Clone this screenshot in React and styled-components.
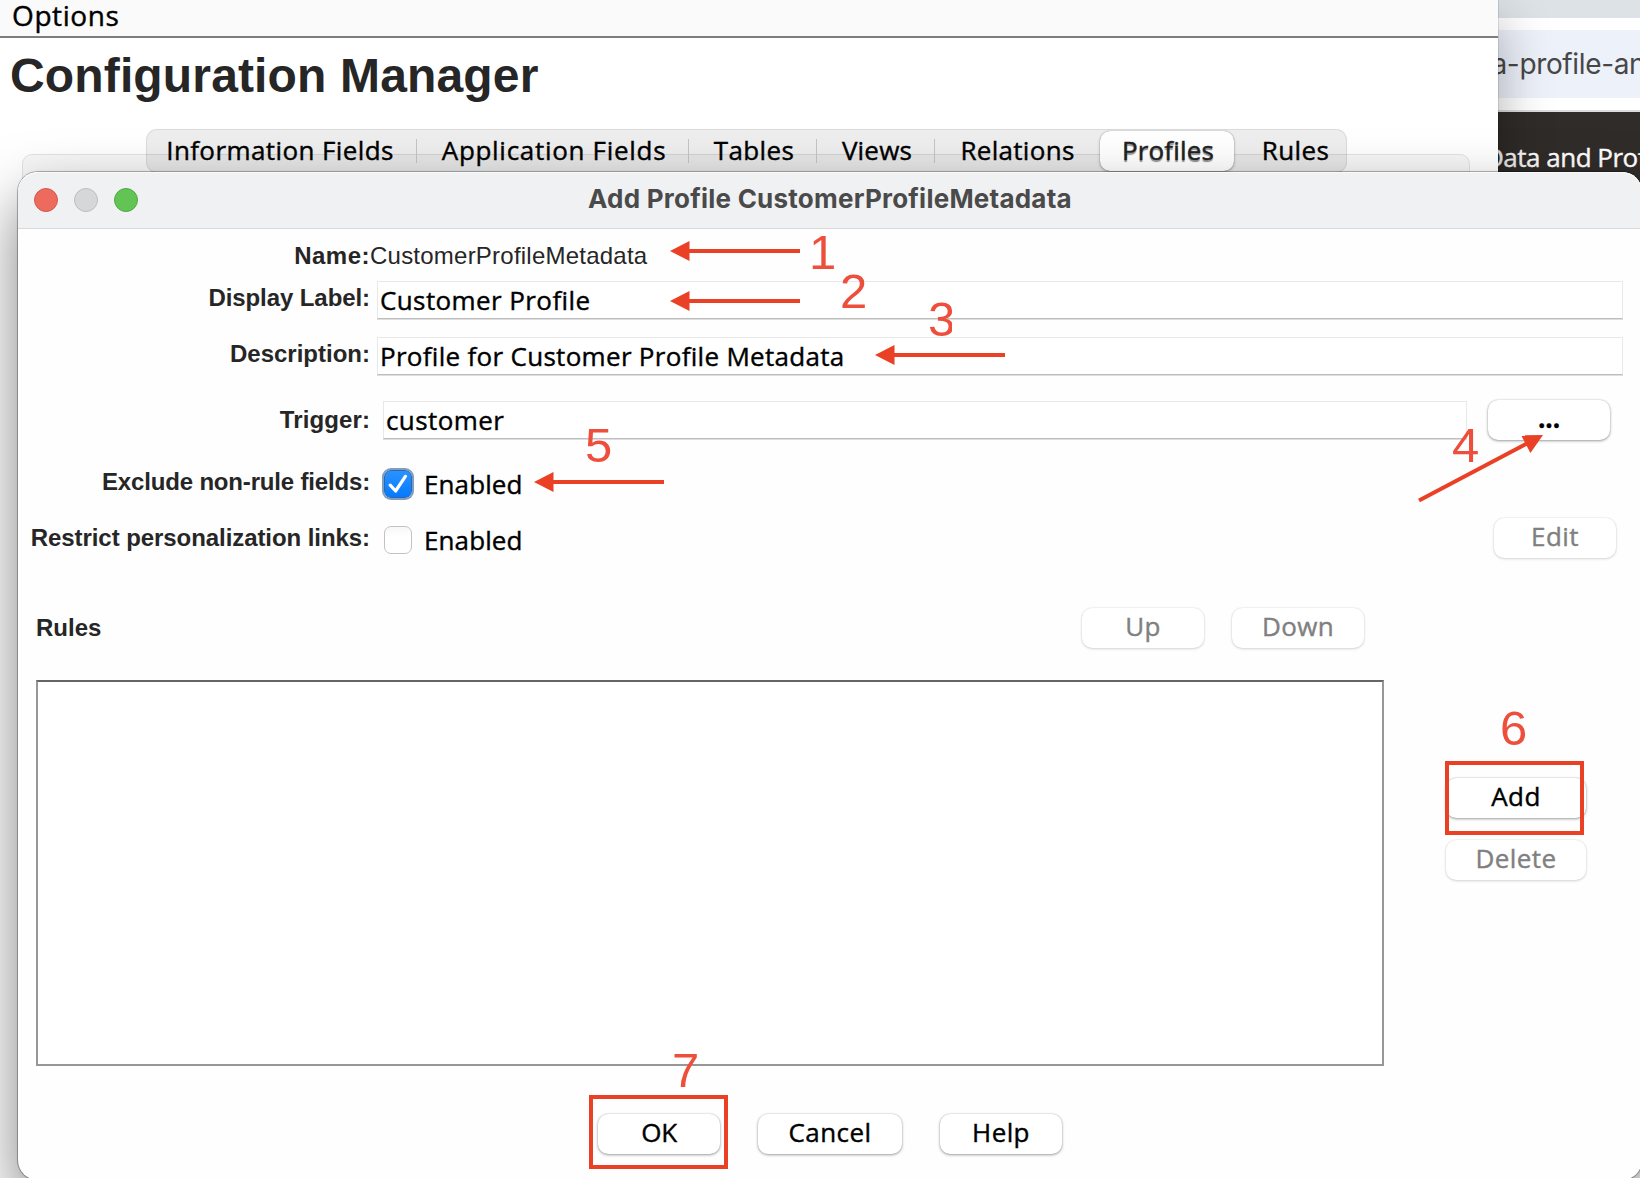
import React from "react";
import styled, { createGlobalStyle, css } from "styled-components";

const Global = createGlobalStyle`
  *, *::before, *::after { box-sizing: border-box; }
  body { margin: 0; background: #fff; overflow: hidden; }
`;

const ui = css`
  font-family: "Open Sans", "Noto Sans", sans-serif;
  font-size: 26px;
  line-height: 36px;
  letter-spacing: ${(p) => (p.$track === undefined ? 0.4 : p.$track)}px;
  -webkit-text-stroke: 0.4px currentColor;
  white-space: pre;
`;
const helvetica = css`
  font-family: "Liberation Sans", Arial, sans-serif;
  letter-spacing: ${(p) => p.$track || 0}px;
  white-space: pre;
`;

const Desktop = styled.div`
  position: relative;
  width: 1640px;
  height: 1178px;
  overflow: hidden;
  display: flex;
  background: #fff;
`;

/* browser window showing at the right */
const Browser = styled.div`
  flex: 1;
  min-width: 0;
  display: flex;
  flex-direction: column;
`;
const TabStrip = styled.div`
  height: 18px;
  background: #dde2e6;
`;
const AddressRow = styled.div`
  height: 92px;
  padding: 12px 0;
  background: #fff;
`;
const Address = styled.div`
  height: 68px;
  overflow: hidden;
  background: #edf1fa;
  color: #474747;
  font: 400 28px/68px Inter, sans-serif;
  letter-spacing: -0.35px;
  white-space: pre;
  text-indent: -6.5px;
`;
const Page = styled.div`
  ${ui}
  height: 220px;
  overflow: hidden;
  border-top: 2px solid #dcdcdc;
  background: #302c29;
  color: #fff;
  padding-top: 27px;
  text-indent: -13px;
`;

/* configuration window */
const Manager = styled.div`
  position: relative;
  z-index: 1;
  width: 1498px;
  height: 1178px;
  background: #fff;
  box-shadow: 0 0 1px rgba(0, 0, 0, 0.6), 0 20px 50px rgba(0, 0, 0, 0.32);
`;
const MenuBar = styled.div`
  ${ui}
  height: 38px;
  padding-left: 12px;
  border-bottom: 2px solid #7d7d7d;
  background: #fafafa;
  color: #000;
  font-size: 28px;
  line-height: 30px;
`;
const Heading = styled.h1`
  ${helvetica}
  margin: 0;
  padding-left: 10px;
  height: 91px;
  color: #262626;
  font-size: 48px;
  line-height: 75px;
`;
const TabArea = styled.div`
  display: grid;
  grid-template-columns: 22px 1448px;
  grid-template-rows: 25px 1fr;
  height: 1048px;
`;
const TabPane = styled.div`
  grid-column: 2;
  grid-row: 2;
  border: 1px solid #e2e2e2;
  border-radius: 10px;
  background: #f7f7f7;
`;
const TabBar = styled.div`
  grid-column: 2;
  grid-row: 1 / 3;
  z-index: 1;
  display: flex;
  width: 1201px;
  height: 44px;
  margin-left: 124px;
  border: 1px solid rgba(0, 0, 0, 0.08);
  border-radius: 11px;
  background: rgba(0, 0, 0, 0.065);
`;
const Tab = styled.div`
  ${ui}
  position: relative;
  flex: none;
  width: ${(p) => p.$w}px;
  height: 40px;
  margin-top: 1px;
  padding: ${(p) => p.$pad || "0"};
  line-height: 39px;
  text-align: center;
  color: #000;
  ${(p) =>
    p.$divider &&
    css`
      &::after {
        content: "";
        position: absolute;
        right: 1px;
        top: 8px;
        width: 1px;
        height: 24px;
        background: #c4c4c4;
      }
    `}
  ${(p) =>
    p.$selected &&
    css`
      border-radius: 10px;
      background: #fff;
      color: #222;
      box-shadow: 0 0 1px rgba(0, 0, 0, 0.4), 0 1px 3px rgba(0, 0, 0, 0.3);
      text-shadow: 0 2px 1px rgba(0, 0, 0, 0.45);
    `}
`;

/* dialog */
const Dialog = styled.div`
  position: absolute;
  z-index: 2;
  left: 18px;
  top: 172px;
  width: 1624px;
  height: 1008px;
  border-radius: 20px;
  background: #fefefe;
  box-shadow: 0 0 0 1px rgba(0, 0, 0, 0.22), 0 0 2px rgba(0, 0, 0, 0.3),
    0 28px 60px rgba(0, 0, 0, 0.5);
`;
const TitleBar = styled.div`
  display: flex;
  align-items: center;
  height: 57px;
  padding: 0 16px;
  border-bottom: 1px solid #d8d9da;
  border-radius: 20px 20px 0 0;
  background: #f0f1f3;
  box-shadow: inset 0 1px #fafafa;
`;
const Lights = styled.div`
  display: flex;
  gap: 16px;
  width: 200px;
`;
const Light = styled.span`
  width: 24px;
  height: 24px;
  border-radius: 50%;
  border: 1px solid ${(p) => p.$edge};
  background: ${(p) => p.$color};
`;
const Title = styled.div`
  flex: 1;
  margin-right: 200px;
  padding-bottom: 3px;
  text-align: center;
  color: #4a4a4a;
  font: 700 26px/34px Inter, sans-serif;
  letter-spacing: 0.23px;
`;

const Row = styled.div`
  display: flex;
  align-items: center;
  height: ${(p) => p.$h}px;
  margin-top: ${(p) => p.$top || 0}px;
`;
const Label = styled.div`
  ${helvetica}
  width: 352px;
  padding-bottom: ${(p) => p.$lift || 0}px;
  text-align: right;
  color: #262626;
  font-size: 24px;
  font-weight: 700;
  line-height: 30px;
`;
const NameRow = styled(Row)`
  padding-top: 2px;
`;
const NameValue = styled.div`
  ${helvetica}
  color: #262626;
  font-size: 24px;
  line-height: 30px;
`;
const Field = styled.div`
  ${ui}
  width: ${(p) => p.$w}px;
  height: 38px;
  margin: 0 0 1px ${(p) => p.$left}px;
  padding-left: 2px;
  border: 1px solid #e8e8e8;
  border-bottom: 1px solid #bdbdbd;
  box-shadow: 0 1px #dedede;
  background: #fff;
  color: #000;
  line-height: 37px;
`;
const Toggle = styled.div`
  display: flex;
  align-items: center;
  padding-top: ${(p) => p.$drop || 0}px;
`;
const Box = styled.span`
  display: flex;
  align-items: center;
  justify-content: center;
  width: 28px;
  height: 28px;
  margin-left: 14px;
  border-radius: 7px;
  border: 1px solid #c2c2c2;
  background: linear-gradient(#f7f7f7, #fff 35%);
  ${(p) =>
    p.$checked &&
    css`
      border: 1px solid #2f66ad;
      background: linear-gradient(#2a93ff, #047aff);
      box-shadow: 0 0 0 2px #7e9dbf;
    `}
`;
const BoxLabel = styled.span`
  ${ui}
  margin-left: 12px;
  color: #000;
`;
const Button = styled.div`
  ${ui}
  width: ${(p) => p.$w}px;
  height: 40px;
  margin-right: ${(p) => p.$end || 0}px;
  padding-bottom: 4px;
  border-radius: 10px;
  background: #fff;
  color: ${(p) => (p.$disabled ? "#808080" : "#000")};
  font-weight: ${(p) => (p.$strong ? 700 : 400)};
  text-align: center;
  box-shadow: ${(p) =>
    p.$disabled
      ? "0 0 1.5px rgba(0,0,0,.16), 0 1px 3px rgba(0,0,0,.14)"
      : "0 0 1.5px rgba(0,0,0,.22), 0 1px 3px rgba(0,0,0,.36)"};
`;
const Spring = styled.div`
  flex: 1;
`;
const RulesTitle = styled(Label)`
  width: auto;
  padding-left: 18px;
`;
const MoveButtons = styled.div`
  display: flex;
  gap: 28px;
  margin-right: 278px;
`;
const RulesArea = styled.div`
  display: flex;
  height: 386px;
  margin-top: 32px;
  padding-left: 18px;
`;
const RulesList = styled.div`
  width: 1348px;
  border: 2px solid #979797;
  border-top-color: #656565;
  background: #fff;
`;
const SideButtons = styled.div`
  display: flex;
  flex-direction: column;
  gap: 22px;
  padding: 98px 0 0 62px;
`;
const Footer = styled.div`
  display: flex;
  gap: 38px;
  margin-top: 48px;
  padding-left: 580px;
`;

/* callouts drawn over the windows */
const Digit = styled.span`
  ${helvetica}
  position: absolute;
  z-index: 4;
  left: ${(p) => p.$x}px;
  top: ${(p) => p.$y - 42}px;
  width: ${(p) => p.$clip || 30}px;
  height: 50px;
  overflow: hidden;
  color: #ee4f3d;
  font-size: 49px;
  line-height: 50px;
`;
const Frame = styled.div`
  position: absolute;
  z-index: 4;
  left: ${(p) => p.$x}px;
  top: ${(p) => p.$y}px;
  width: 139px;
  height: 74px;
  border: 4px solid #ea4025;
`;
const Arrows = styled.svg`
  position: absolute;
  z-index: 4;
  left: 0;
  top: 0;
  pointer-events: none;
`;

const Arrow = ({ from, to }) => {
  const length = Math.hypot(to[0] - from[0], to[1] - from[1]);
  const angle = (Math.atan2(to[1] - from[1], to[0] - from[0]) * 180) / Math.PI;
  return (
    <g transform={`translate(${from[0]} ${from[1]}) rotate(${angle})`} fill="#ea4025">
      <rect x="0" y="-2" width={length - 18} height="4" />
      <path d={`M${length} 0 L${length - 19.5} -10 V10 Z`} />
    </g>
  );
};

const tabs = [
  { name: "Information Fields", w: 271, divider: true, pad: "0 5px 0 0" },
  { name: "Application Fields", w: 272, divider: true, track: 0.7 },
  { name: "Tables", w: 128, divider: true },
  { name: "Views", w: 118, divider: true, track: 0.2 },
  { name: "Relations", w: 164, track: 0.3, pad: "0 1px 0 0" },
  { name: "Profiles", w: 134, selected: true, track: 0.15, pad: "0 0 0 2px" },
  { name: "Rules", w: 113, pad: "0 0 0 10px" },
];

const arrows = [
  { from: [800, 251], to: [670, 251] },
  { from: [800, 301], to: [670, 301] },
  { from: [1005, 355], to: [875, 355] },
  { from: [664, 482], to: [534, 482] },
  { from: [1419, 500.5], to: [1543, 435] },
];

const digits = [
  { n: "1", x: 809, y: 269 },
  { n: "2", x: 840, y: 308 },
  { n: "3", x: 928, y: 336, clip: 24 },
  { n: "4", x: 1452, y: 462 },
  { n: "5", x: 585, y: 462 },
  { n: "6", x: 1500, y: 745 },
  { n: "7", x: 672, y: 1087 },
];

export default function App() {
  return (
    <Desktop>
      <Global />
      <Manager>
        <MenuBar $track={0.6}>Options</MenuBar>
        <Heading $track={0.15}>Configuration Manager</Heading>
        <TabArea>
          <TabPane />
          <TabBar>
            {tabs.map((t) => (
              <Tab
                key={t.name}
                $w={t.w}
                $pad={t.pad}
                $track={t.track}
                $divider={t.divider}
                $selected={t.selected}
              >
                {t.name}
              </Tab>
            ))}
          </TabBar>
        </TabArea>
      </Manager>
      <Browser>
        <TabStrip />
        <AddressRow>
          <Address>a-profile-an</Address>
        </AddressRow>
        <Page $track={-0.5}>Data and Prof</Page>
      </Browser>

      <Dialog>
        <TitleBar>
          <Lights>
            <Light $color="#ed6a5e" $edge="#d6584c" />
            <Light $color="#d6d7d8" $edge="#bdbebf" />
            <Light $color="#61c454" $edge="#51a945" />
          </Lights>
          <Title>Add Profile CustomerProfileMetadata</Title>
        </TitleBar>
        <NameRow $h={52}>
          <Label $track={0.5}>Name:</Label>
          <NameValue $track={0.23}>CustomerProfileMetadata</NameValue>
        </NameRow>
        <Row $h={39}>
          <Label $lift={5} $track={-0.08}>Display Label:</Label>
          <Field $w={1246} $left={7}>Customer Profile</Field>
        </Row>
        <Row $h={39} $top={17}>
          <Label $lift={5}>Description:</Label>
          <Field $w={1246} $left={7} $track={0.3}>Profile for Customer Profile Metadata</Field>
        </Row>
        <Row $h={40} $top={24}>
          <Label $track={0.1}>Trigger:</Label>
          <Field $w={1084} $left={13}>customer</Field>
          <Spring />
          <Button $w={122} $end={32} $strong $track={0}>...</Button>
        </Row>
        <Row $h={30} $top={29}>
          <Label $lift={5} $track={-0.17}>Exclude non-rule fields:</Label>
          <Toggle>
            <Box $checked>
              <svg width="20" height="20" viewBox="0 0 20 20" fill="none">
                <path
                  d="M2.2 11.2 L7.6 17 L17.4 2.4"
                  stroke="#fff"
                  strokeWidth="3.2"
                  strokeLinecap="round"
                  strokeLinejoin="round"
                />
              </svg>
            </Box>
            <BoxLabel $track={0.1}>Enabled</BoxLabel>
          </Toggle>
        </Row>
        <Row $h={40} $top={19}>
          <Label $lift={1} $track={-0.07}>Restrict personalization links:</Label>
          <Toggle $drop={3}>
            <Box />
            <BoxLabel $track={0.1}>Enabled</BoxLabel>
          </Toggle>
          <Spring />
          <Button $w={122} $end={26} $disabled>Edit</Button>
        </Row>
        <Row $h={40} $top={50}>
          <RulesTitle>Rules</RulesTitle>
          <Spring />
          <MoveButtons>
            <Button $w={122} $disabled>Up</Button>
            <Button $w={132} $disabled>Down</Button>
          </MoveButtons>
        </Row>
        <RulesArea>
          <RulesList />
          <SideButtons>
            <Button $w={140}>Add</Button>
            <Button $w={140} $disabled>Delete</Button>
          </SideButtons>
        </RulesArea>
        <Footer>
          <Button $w={122} $track={-0.4}>OK</Button>
          <Button $w={144}>Cancel</Button>
          <Button $w={122}>Help</Button>
        </Footer>
      </Dialog>

      <Arrows width="1640" height="1178">
        {arrows.map((a, i) => (
          <Arrow key={i} from={a.from} to={a.to} />
        ))}
      </Arrows>
      <Frame $x={1445} $y={761} />
      <Frame $x={589} $y={1095} />
      {digits.map((d) => (
        <Digit key={d.n} $x={d.x} $y={d.y} $clip={d.clip}>{d.n}</Digit>
      ))}
    </Desktop>
  );
}
